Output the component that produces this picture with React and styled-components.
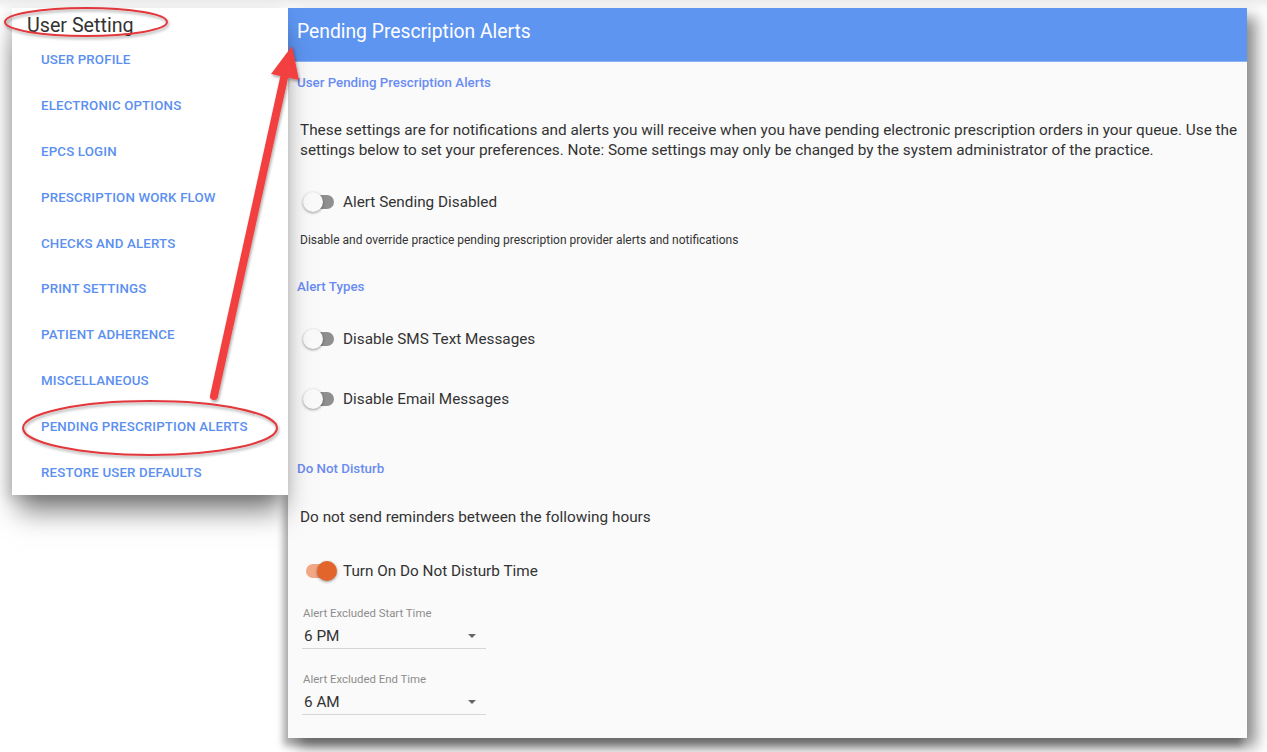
import React from "react";
import styled, { createGlobalStyle } from "styled-components";

const GlobalStyle = createGlobalStyle`
  html, body {
    margin: 0;
    padding: 0;
    background: #ffffff;
  }
  body {
    font-family: Roboto, "Liberation Sans", sans-serif;
  }
`;

const Page = styled.div`
  position: relative;
  width: 1267px;
  height: 752px;
  overflow: hidden;
  display: flex;
  align-items: flex-start;
  padding: 8px 0 0 12px;
  box-sizing: border-box;
  background: linear-gradient(#ececec 0px, #ffffff 10px);
`;

const SidePanel = styled.div`
  position: relative;
  z-index: 2;
  width: 276px;
  height: 487px;
  background: #ffffff;
  box-shadow: 0 22px 26px -6px rgba(0, 0, 0, 0.5), -5px 4px 12px rgba(0, 0, 0, 0.14);
  display: flex;
  flex-direction: column;
`;

const SideTitle = styled.div`
  padding: 7px 0 0 15px;
  height: 22px;
  line-height: 22px;
  font-size: 19.7px;
  color: #333333;
`;

const NavItem = styled.div`
  height: 46px;
  display: flex;
  align-items: center;
  padding-left: 29px;
  font-size: 13.3px;
  font-weight: 500;
  letter-spacing: 0.15px;
  color: #5b8ff0;
  text-transform: uppercase;
`;

const MainPanel = styled.div`
  position: relative;
  z-index: 1;
  width: 959px;
  height: 730px;
  background: #fafafa;
  box-shadow: 9px 9px 14px rgba(0, 0, 0, 0.45), -5px 8px 7px rgba(0, 0, 0, 0.3);
  display: flex;
  flex-direction: column;
`;

const Header = styled.div`
  height: 54px;
  background: #5d95f1;
  border-bottom: 1px solid #8db3f5;
  display: flex;
  align-items: center;
  padding: 0 0 6px 9px;
  box-sizing: border-box;
  font-size: 19.3px;
  color: #ffffff;
`;

const Body = styled.div`
  display: flex;
  flex-direction: column;
  padding: 0 6px 0 9px;
`;

const SectionLabel = styled.div`
  margin-top: ${(p) => p.$mt}px;
  height: 20px;
  line-height: 20px;
  font-size: 13.3px;
  font-weight: 500;
  color: #6a8cf2;
`;

const Paragraph = styled.p`
  margin: ${(p) => p.$mt}px 0 0 3px;
  font-size: 15.35px;
  line-height: 20px;
  color: #333333;
`;

const HelpText = styled.div`
  margin: ${(p) => p.$mt}px 0 0 3px;
  font-size: 12px;
  line-height: 16px;
  color: #333333;
`;

const ToggleRow = styled.div`
  margin: ${(p) => p.$mt}px 0 0 6px;
  height: 40px;
  display: flex;
  align-items: center;
  gap: 6px;
  font-size: 15.3px;
  color: #333333;
`;

const Toggle = styled.span`
  position: relative;
  width: 34px;
  height: 20px;
  flex: none;
`;

const Track = styled.span`
  position: absolute;
  left: 3px;
  top: 3px;
  width: 28px;
  height: 14px;
  border-radius: 7px;
  background: ${(p) => (p.$on ? "#f2a684" : "#8f8f8f")};
`;

const Knob = styled.span`
  position: absolute;
  top: 0;
  left: ${(p) => (p.$on ? 14 : 0)}px;
  width: 20px;
  height: 20px;
  border-radius: 50%;
  background: ${(p) => (p.$on ? "#e2652c" : "#fafafa")};
  box-shadow: 0 1px 3px rgba(0, 0, 0, 0.4);
`;

const FieldLabel = styled.div`
  margin: ${(p) => p.$mt}px 0 0 6px;
  font-size: 11.4px;
  line-height: 14px;
  color: #8d8d8d;
`;

const Select = styled.div`
  margin: 4px 0 0 5px;
  width: 184px;
  height: 25px;
  border-bottom: 1px solid #d6d6d6;
  display: flex;
  align-items: center;
  justify-content: space-between;
  padding: 0 10px 0 2px;
  box-sizing: border-box;
  font-size: 15.3px;
  color: #333333;
`;

const Caret = styled.span`
  width: 0;
  height: 0;
  border-left: 4px solid transparent;
  border-right: 4px solid transparent;
  border-top: 4px solid #666666;
`;

const Annotations = styled.svg`
  position: absolute;
  left: 0;
  top: 0;
  z-index: 5;
  pointer-events: none;
`;

const navItems = [
  "User Profile",
  "Electronic Options",
  "EPCS Login",
  "Prescription Work Flow",
  "Checks and Alerts",
  "Print Settings",
  "Patient Adherence",
  "Miscellaneous",
  "Pending Prescription Alerts",
  "Restore User Defaults",
];

const Switch = ({ on, label, mt }) => (
  <ToggleRow $mt={mt}>
    <Toggle>
      <Track $on={on} />
      <Knob $on={on} />
    </Toggle>
    {label}
  </ToggleRow>
);

const TimeSelect = ({ label, value, mt }) => (
  <>
    <FieldLabel $mt={mt}>{label}</FieldLabel>
    <Select>
      {value}
      <Caret />
    </Select>
  </>
);

export default function App() {
  return (
    <Page>
      <GlobalStyle />
      <SidePanel>
        <SideTitle>User Setting</SideTitle>
        {navItems.map((item) => (
          <NavItem key={item}>{item}</NavItem>
        ))}
      </SidePanel>

      <MainPanel>
        <Header>Pending Prescription Alerts</Header>
        <Body>
          <SectionLabel $mt={11}>User Pending Prescription Alerts</SectionLabel>
          <Paragraph $mt={27}>
            These settings are for notifications and alerts you will receive when you have pending
            electronic prescription orders in your queue. Use the settings below to set your
            preferences. Note: Some settings may only be changed by the system administrator of the
            practice.
          </Paragraph>
          <Switch mt={22} label="Alert Sending Disabled" />
          <HelpText $mt={10}>
            Disable and override practice pending prescription provider alerts and notifications
          </HelpText>
          <SectionLabel $mt={29}>Alert Types</SectionLabel>
          <Switch mt={22} label="Disable SMS Text Messages" />
          <Switch mt={20} label="Disable Email Messages" />
          <SectionLabel $mt={40}>Do Not Disturb</SectionLabel>
          <Paragraph $mt={28}>Do not send reminders between the following hours</Paragraph>
          <Switch on mt={24} label="Turn On Do Not Disturb Time" />
          <TimeSelect mt={15} label="Alert Excluded Start Time" value="6 PM" />
          <TimeSelect mt={23} label="Alert Excluded End Time" value="6 AM" />
        </Body>
      </MainPanel>

      <Annotations width="1267" height="752" viewBox="0 0 1267 752">
        <defs>
          <filter id="shade" x="-20%" y="-20%" width="140%" height="140%">
            <feDropShadow dx="1" dy="2" stdDeviation="1.5" floodColor="#000" floodOpacity="0.35" />
          </filter>
        </defs>
        <g filter="url(#shade)">
          <ellipse cx="86" cy="22" rx="81" ry="14" fill="none" stroke="#e2383c" strokeWidth="2" />
          <ellipse cx="150" cy="428" rx="127" ry="27" fill="none" stroke="#e2383c" strokeWidth="2" />
          <line x1="214" y1="396" x2="284" y2="78" stroke="#f2403f" strokeWidth="8" strokeLinecap="round" />
          <polygon points="292,46 299,80 271,74" fill="#f2403f" />
        </g>
      </Annotations>
    </Page>
  );
}
